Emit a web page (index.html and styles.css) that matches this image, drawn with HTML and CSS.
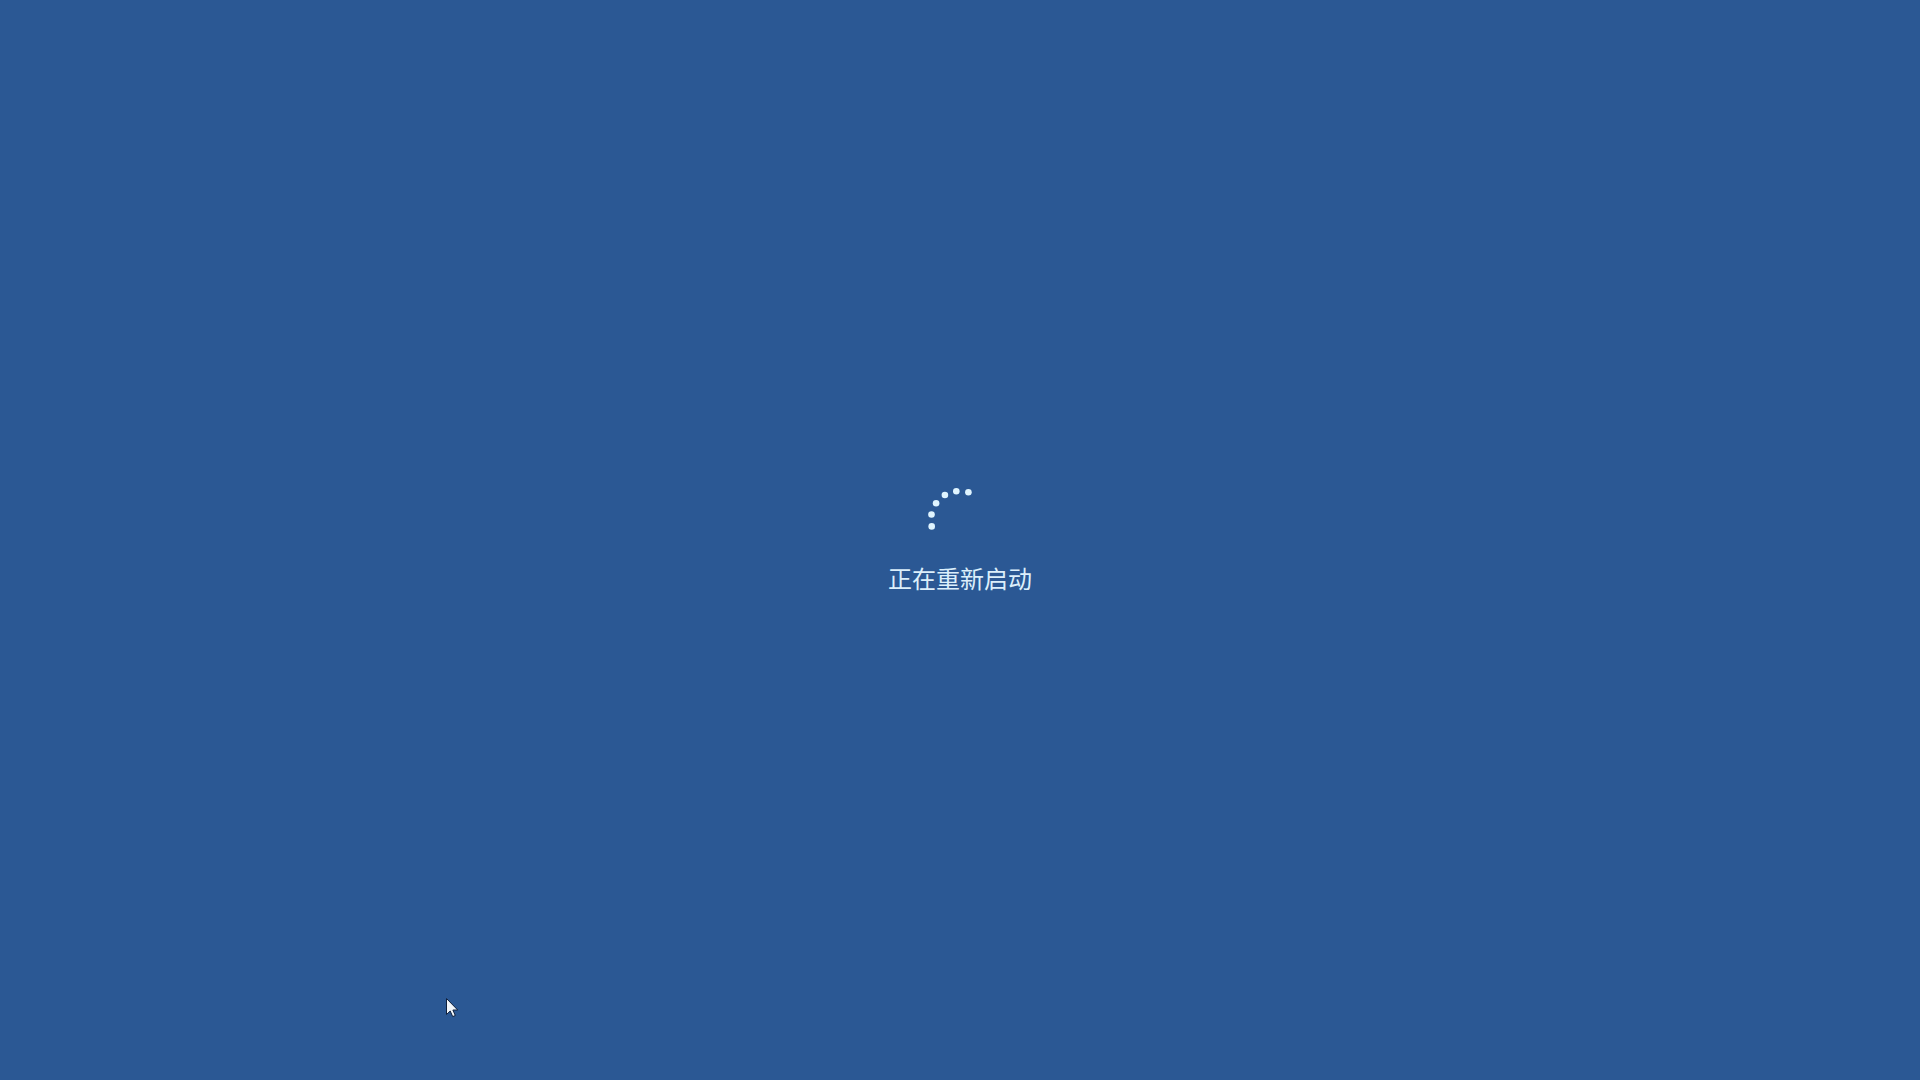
FILE: index.html
```html
<!DOCTYPE html>
<html lang="zh-CN">
  <head>
    <meta charset="UTF-8" />
    <meta name="viewport" content="width=device-width, initial-scale=1.0" />
    <title>正在重新启动</title>
    <link rel="stylesheet" href="styles.css">
  </head>
  <body>
    <main class="restart" role="status">
      <svg class="spinner" viewBox="0 0 64 64" aria-hidden="true">
        <circle cx="3.7" cy="38.4" r="3.3" />
        <circle cx="3.5" cy="26.5" r="3.3" />
        <circle cx="8.1" cy="15.3" r="3.3" />
        <circle cx="16.9" cy="7" r="3.3" />
        <circle cx="28.3" cy="3.3" r="3.3" />
        <circle cx="40.4" cy="4.3" r="3.3" />
      </svg>
      <p class="message">正在重新启动</p>
    </main>
    <svg class="cursor" viewBox="0 0 12 20" aria-hidden="true">
      <path d="M.5 .5V16.5L4.2 13L6.7 18.6L9.3 17.5L6.9 12H11.7Z" />
    </svg>
  </body>
</html>
```

FILE: styles.css
```css
* {
  margin: 0;
  padding: 0;
  box-sizing: border-box;
}
body {
  position: relative;
  min-height: 100vh;
  background: #2b5894;
  color: #dceffb;
  font-family: "Noto Sans CJK SC", sans-serif;
  overflow: hidden;
}
.restart {
  display: flex;
  flex-direction: column;
  align-items: center;
  justify-content: center;
  gap: 10px;
  min-height: 100vh;
  padding-top: 2px;
}
.spinner {
  width: 64px;
  height: 64px;
  fill: #dff4ff;
}
.message {
  font-size: 24px;
  font-weight: 400;
  line-height: 32px;
}
.cursor {
  position: absolute;
  left: 446px;
  top: 998px;
  width: 12px;
  height: 20px;
  fill: #f2f6fa;
  stroke: #10203c;
  stroke-width: 1;
  overflow: visible;
}
```
